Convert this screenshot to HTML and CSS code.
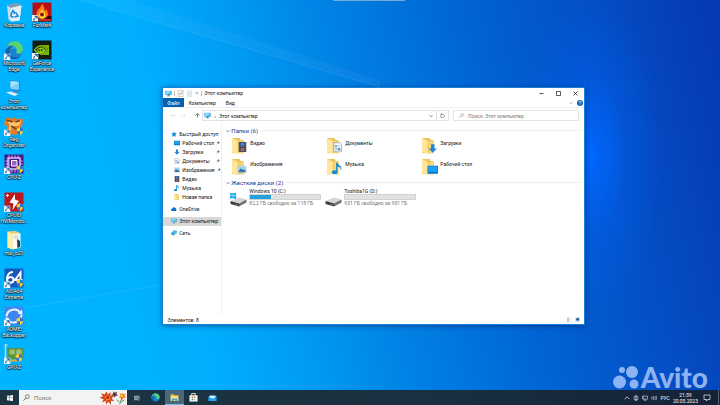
FILE: index.html
```html
<!DOCTYPE html>
<html lang="ru">
<head>
<meta charset="utf-8">
<title>Этот компьютер</title>
<link rel="stylesheet" href="styles.css">
</head>
<body>
<svg class="defs" aria-hidden="true">
  <symbol id="pc" viewBox="0 0 16 16"><path d="M1 2h14v9H1z" fill="#1b7fc4"/><path d="M2 3h12v7H2z" fill="#4cc3f5"/><path d="M2 3h12L4 10H2z" fill="#8be0ff"/><path d="M6 11h4v2h2v1H4v-1h2z" fill="#5a7e99"/></symbol>
  <symbol id="arrow" viewBox="0 0 16 16"><path d="M5 1h6v7h4l-7 7-7-7h4z" fill="#2586d8"/></symbol>
  <symbol id="doc" viewBox="0 0 16 16"><path d="M2 1h9l3 3v11H2z" fill="#f7fafc" stroke="#8497a5"/><path d="M4 5h3v3H4zM8 9h4v4H8z" fill="#4a96cf"/><path d="M8 6h4M4 10h3M4 12h3" stroke="#7696ac"/></symbol>
  <symbol id="props" viewBox="0 0 16 16"><path d="M2 1h12v14H2z" fill="#fbfbfb" stroke="#9a9a9a"/><path d="M5 8l2 3 5-7" fill="none" stroke="#9a6a5a" stroke-width="1.500"/></symbol>
  <symbol id="pic" viewBox="0 0 16 16"><path d="M1 2h14v12H1z" fill="#fff" stroke="#9aaab5"/><path d="M2 3h12v6H2z" fill="#8bd0fa"/><path d="M2 10l4-4 4 3 4-1v5H2z" fill="#34719f"/></symbol>
  <symbol id="film" viewBox="0 0 16 16"><path d="M2 0h12v16H2z" fill="#36424e"/><path d="M5 1h6v6H5z" fill="#4b80d2"/><path d="M5 9h6v6H5z" fill="#a06264"/><path d="M3.500 1v14M12.500 1v14" stroke="#b8c5ce" stroke-dasharray="1 2"/></symbol>
  <symbol id="note" viewBox="0 0 16 16"><path d="M6 0h2c0 4 7 4 5 10h-1c1-3-2-4-4-4v7a4 3 0 1 1-2-2z" fill="#168bd5"/></symbol>
  <symbol id="screen" viewBox="0 0 16 16"><path d="M0 2h16v12H0z" fill="#087ad1"/><path d="M1 3h14v8H1z" fill="#1ba2f1"/></symbol>
  <symbol id="folder" viewBox="0 0 16 16"><path d="M1 0h8l1 2h3v14H1z" fill="#e9c55b"/><path d="M1 0l6 3v13l-6-1z" fill="#ffe69a"/><path d="M8 3h5v13H8z" fill="#f7d677"/></symbol>
  <symbol id="star" viewBox="0 0 16 16"><path d="M8 1l2 4 5 1-3 4 1 5-5-2-5 2 1-5-3-4 5-1z" fill="#1f90d5"/></symbol>
  <symbol id="cloud" viewBox="0 0 16 16"><path d="M3 13a3 3 0 0 1 0-6 5 5 0 0 1 9-1 4 4 0 0 1 1 7z" fill="#0b6dc5"/></symbol>
  <symbol id="net" viewBox="0 0 16 16"><circle cx="6" cy="9" r="5" fill="#2582c4"/><path d="M7 2h8v7H7z" fill="#55bdf0" stroke="#1a79b5"/><path d="M2 9h8M6 4v10" stroke="#a5e1ff"/></symbol>
  <symbol id="pin" viewBox="0 0 10 10"><path d="M6 1l3 3-2 1-1 2-3-3 2-1zM4 6L1 9" fill="#69737b" stroke="#69737b"/></symbol>
  <symbol id="drive" viewBox="0 0 34 34"><path d="M1 22l17-7 15 4-15 8z" fill="#d5d5d5"/><path d="M1 22l17 5v6L1 28z" fill="#3d3d3d"/><path d="M18 27l15-8v6l-15 8z" fill="#707070"/><path d="M11 29l4 1" stroke="#69d478" stroke-width="1.500"/></symbol>
  <symbol id="win" viewBox="0 0 16 16"><path d="M0 2l7-1v6H0zM8 1l8-1v7H8zM0 8h7v7l-7-1zM8 8h8v8l-8-1z" fill="currentColor"/></symbol>
  <symbol id="down" viewBox="0 0 10 10"><path d="M1 3l4 4 4-4" fill="none" stroke="currentColor" stroke-width="1.500"/></symbol>
  <symbol id="link" viewBox="0 0 16 16"><path d="M0 0h16v16H0z" fill="#f7f7f7"/><path d="M3 14c0-5 2-7 6-7V4H6V2h8v8h-2V7c-4 0-6 2-6 7z" fill="#1464b4"/></symbol>
  <symbol id="shield" viewBox="0 0 16 16"><path d="M8 0l7 3c0 7-3 11-7 13C4 14 1 10 1 3z" fill="#ffcf36"/><path d="M8 0l7 3-.5 5H8zM1.500 8H8v8c-3-1-6-4-6.500-8z" fill="#2378d4"/></symbol>
  <symbol id="edge" viewBox="0 0 40 40"><circle cx="20" cy="20" r="18" fill="#1683d0"/><path d="M2 19C4 7 12 1 21 2c12 1 18 10 17 19-1 6-8 9-14 5 3-4 1-9-4-9-8 0-12 5-11 14C4 29 2 24 2 19z" fill="#27a9dc"/><path d="M5 11C14 0 32-1 37 14c3 11-6 15-13 12 3-4 3-11-4-14-5-2-11-2-15-1z" fill="#59d46f"/><path d="M3 20c4-7 10-9 17-7-8 2-11 8-8 15 4 8 13 9 22 4-7 9-20 8-26 1-4-4-5-8-5-13z" fill="#125da9"/></symbol>
  <symbol id="lens" viewBox="0 0 16 16"><circle cx="10" cy="6" r="4.500" fill="none" stroke="currentColor" stroke-width="1.300"/><path d="M7 9l-6 6" stroke="currentColor" stroke-width="1.500"/></symbol>
</svg>

<div class="screen">
  <main class="desktop">
    <svg class="rays" viewBox="0 0 720 390" preserveAspectRatio="none" aria-hidden="true"><path d="M80 0L380 87L380 80L130 0z" fill="#fff" opacity=".04"/><path d="M80 0L380 87M0 312L200 278" fill="none" stroke="#fff" opacity=".09"/></svg>
    <div class="top-tab"></div>
    <nav class="shortcuts" aria-label="Рабочий стол">
      <a class="shortcut" href="#"><svg viewBox="0 0 40 40"><path d="M6 7l18-5 11 5-4 30-17 2-5-4z" fill="#c7dfec"/><path d="M6 7l18-5 11 5-21 5z" fill="#7e9cae"/><path d="M14 12l21-5-4 30-17 2z" fill="#e4f1f8"/><path d="M14 24l4-7 4 5-3 1M24 21l4 7-7 2M19 31l-5-3 1-4" fill="none" stroke="#1682d2" stroke-width="3"/></svg><span>Корзина</span></a>
      <a class="shortcut" href="#"><svg viewBox="0 0 40 40"><path d="M1 1h38v38H1z" fill="#b61016"/><path d="M1 28h38v11H1z" fill="#380909"/><path d="M20 3c-1 9-12 12-11 22 1 6 6 9 11 9s12-3 12-10c0-4-3-6-3-10-2 2-3 3-4 4 1-6-2-11-5-15z" fill="#ff7619"/><path d="M20 14c-2 5-6 7-6 12 0 9 12 9 13 0 0-5-5-7-7-12z" fill="#ffd83a"/><circle cx="20" cy="25" r="4" fill="#8e170c"/><path d="M14 36h24" stroke="#ff3021" stroke-width="3"/><use href="#link" y="26" width="13" height="13"/></svg><span>FurMark</span></a>
      <a class="shortcut" href="#"><svg viewBox="0 0 40 40"><use href="#edge" width="40" height="40"/><use href="#link" y="27" width="13" height="13"/></svg><span>Microsoft Edge</span></a>
      <a class="shortcut" href="#"><svg viewBox="0 0 40 40"><path d="M1 1h38v38H1z" fill="#151b15"/><path d="M16 10h18v20H16z" fill="#78b900"/><path d="M5 20c9-13 20-11 27 0-8 10-19 12-27 0z" fill="#151b15"/><path d="M5 20c8-11 17-11 25 0-7 8-17 10-25 0zM11 20c4 7 10 5 14 0-5-6-10-6-14 0zM16 20c1-4 5-3 7 0-2 4-6 4-7 0" fill="none" stroke="#8ac718" stroke-width="2.500"/><use href="#link" y="26" width="13" height="13"/></svg><span>GeForce Experience</span></a>
      <a class="shortcut first-column" href="#"><svg viewBox="0 0 40 40"><path d="M12 4l20 3v20l-20-3z" fill="#1688d9"/><path d="M13 6l17 2v16l-17-2z" fill="#78cff9"/><path d="M13 6l17 2-17 11z" fill="#a5e5ff"/><path d="M20 25v4l-6 1 10 3 7-3-6-2v-2" fill="#3f89b9"/><path d="M4 29l9-2 16 5-8 4z" fill="#dbeef8"/></svg><span>Этот компьютер</span></a>
      <a class="shortcut first-column" href="#"><svg viewBox="0 0 40 40"><path d="M3 3l14 2 5-3 4 5 12-2-1 14-5 4 3 11-15 4-16-4 3-14-7-3z" fill="#e67c23"/><path d="M7 9l14 4 14-6-4 12-13 2-9 11 2-14z" fill="#ffc56b"/><path d="M5 8l12 4M23 12l9-3M14 20l14 8" stroke="#68431e" stroke-width="3"/><use href="#link" y="27" width="13" height="13"/><use href="#shield" x="24" y="22" width="16" height="17"/></svg><span>Reg Organizer</span></a>
      <a class="shortcut first-column" href="#"><svg viewBox="0 0 40 40"><path d="M1 1h38v38H1z" fill="#4d168b"/><path d="M8 8h24v22H8z" fill="none" stroke="#d7c4f0" stroke-width="3"/><path d="M10 3v32M16 3v5M22 3v5M28 3v5M16 30v7M22 30v7M28 30v7M3 14h5M3 20h5M3 26h5M32 14h5M32 20h5" stroke="#cbb2e8" stroke-width="2"/><path d="M15 13h11v11H15z" fill="#8f65bd" stroke="#fff" stroke-width="2"/><use href="#link" y="27" width="13" height="13"/><use href="#shield" x="24" y="22" width="16" height="17"/></svg><span>CPU-Z</span></a>
      <a class="shortcut first-column" href="#"><svg viewBox="0 0 40 40"><path d="M1 1h38v38H1z" fill="#be171d"/><path d="M22 4L11 21l8 2-2 13 13-18-8-3z" fill="#fff"/><path d="M7 4v6M4 7h6" stroke="#ffdada" stroke-width="2"/><use href="#link" y="27" width="13" height="13"/><use href="#shield" x="24" y="22" width="16" height="17"/></svg><span>CPUID HWMonito…</span></a>
      <a class="shortcut first-column" href="#"><svg viewBox="0 0 40 40"><path d="M7 3l16-1 9 4v30l-16 3-9-4z" fill="#efd173"/><path d="M17 8l16-1v28l-16 3z" fill="#f8fbfa"/><path d="M20 12h9M20 16h9" stroke="#b3c2c3" stroke-width="2"/><path d="M26 18l6 4v12l-5 2z" fill="#273a43"/><path d="M7 3l10 5v30L7 35z" fill="#ffeeaa"/></svg><span>msi_b21</span></a>
      <a class="shortcut first-column" href="#"><svg viewBox="0 0 40 40"><path d="M1 1h38v38H1z" fill="#1758bd"/><path d="M18 8C9 8 5 17 6 24c1 8 13 7 13 0 0-7-9-8-13-1M33 31V9L22 24h15" fill="none" stroke="#fff" stroke-width="4"/><use href="#link" y="27" width="13" height="13"/><use href="#shield" x="24" y="22" width="16" height="17"/></svg><span>AIDA64 Extreme</span></a>
      <a class="shortcut first-column" href="#"><svg viewBox="0 0 40 40"><path d="M1 1h38v38H1z" fill="#3f86ef"/><path d="M5 21C6 5 27 3 32 14M35 17C34 35 12 38 7 25" fill="none" stroke="#e8f4ff" stroke-width="4"/><path d="M27 15l10 2-1-10zM11 25L3 22l1 11z" fill="#e8f4ff"/><use href="#link" y="27" width="13" height="13"/><use href="#shield" x="24" y="22" width="16" height="17"/></svg><span>AOMEI Backupper</span></a>
      <a class="shortcut first-column" href="#"><svg viewBox="0 0 40 40"><path d="M3 1v37M1 2h6" stroke="#c9d4ce" stroke-width="3"/><path d="M7 8h32v22H7z" fill="#55943d"/><path d="M11 11h11v10H11z" fill="#9bc36c"/><circle cx="30" cy="16" r="6" fill="#a5b77b"/><path d="M10 31h25v4H10z" fill="#d6ad37"/><use href="#link" y="27" width="13" height="13"/><use href="#shield" x="22" y="19" width="16" height="17"/></svg><span>GPU-Z</span></a>
    </nav>

    <section class="window" aria-label="Этот компьютер">
      <header class="titlebar">
        <svg class="icon"><use href="#pc"/></svg><i class="rule"></i>
        <svg class="icon"><use href="#props"/></svg>
        <svg class="icon" viewBox="0 0 16 16"><path d="M3 2h10v13H3z" fill="#e0edf7" stroke="#c3d3df"/></svg>
        <svg class="tiny"><use href="#down"/></svg><i class="rule"></i>
        <h1>Этот компьютер</h1>
        <div class="window-buttons">
          <button aria-label="Свернуть"><svg viewBox="0 0 10 10"><path d="M1 5h8" stroke="#222" stroke-width="1.500"/></svg></button>
          <button aria-label="Развернуть"><svg viewBox="0 0 10 10"><path d="M1 1h8v8H1z" fill="none" stroke="#222" stroke-width="1.500"/></svg></button>
          <button aria-label="Закрыть"><svg viewBox="0 0 10 10"><path d="M1 1l8 8M9 1L1 9" stroke="#222" stroke-width="1.500"/></svg></button>
        </div>
      </header>
      <div class="tabs">
        <button class="file-tab">Файл</button><button>Компьютер</button><button>Вид</button>
        <svg class="tiny expand"><use href="#down"/></svg>
        <svg class="help" viewBox="0 0 16 16"><circle cx="8" cy="8" r="8" fill="#0860b8"/><path d="M5 6c0-4 7-3 6 0-1 2-3 2-3 4M8 12v2" fill="none" stroke="#fff" stroke-width="2"/></svg>
      </div>
      <div class="toolbar">
        <button class="back" aria-label="Назад"><svg viewBox="0 0 10 10"><path d="M9 5H1l3-3M1 5l3 3" fill="none" stroke="#ccd0d4"/></svg></button>
        <button class="forward" aria-label="Вперёд"><svg viewBox="0 0 10 10"><path d="M1 5h8L6 2M9 5L6 8" fill="none" stroke="#ccd0d4"/></svg></button>
        <button class="up" aria-label="Вверх"><svg viewBox="0 0 10 10"><path d="M5 9V1L1 5M5 1l4 4" fill="none" stroke="#555" stroke-width="1.500"/></svg></button>
        <div class="address"><svg class="icon"><use href="#pc"/></svg><span class="crumb">›</span><span>Этот компьютер</span><svg class="tiny"><use href="#down"/></svg></div>
        <button class="refresh" aria-label="Обновить"><svg viewBox="0 0 10 10"><path d="M3 2a4 4 0 1 0 4 0M3 0v3h3" fill="none" stroke="#555" stroke-width="1.200"/></svg></button>
        <label class="search"><svg class="lens"><use href="#lens"/></svg><input type="search" placeholder="Поиск: Этот компьютер" aria-label="Поиск: Этот компьютер"></label>
      </div>
      <div class="panes">
        <nav class="tree" aria-label="Навигация">
          <a href="#"><svg class="icon"><use href="#star"/></svg>Быстрый доступ</a>
          <a class="child" href="#"><svg class="icon"><use href="#screen"/></svg>Рабочий стол<svg class="pin"><use href="#pin"/></svg></a>
          <a class="child" href="#"><svg class="icon"><use href="#arrow"/></svg>Загрузки<svg class="pin"><use href="#pin"/></svg></a>
          <a class="child" href="#"><svg class="icon"><use href="#doc"/></svg>Документы<svg class="pin"><use href="#pin"/></svg></a>
          <a class="child" href="#"><svg class="icon"><use href="#pic"/></svg>Изображения<svg class="pin"><use href="#pin"/></svg></a>
          <a class="child" href="#"><svg class="icon"><use href="#film"/></svg>Видео</a>
          <a class="child" href="#"><svg class="icon"><use href="#note"/></svg>Музыка</a>
          <a class="child" href="#"><svg class="icon"><use href="#folder"/></svg>Новая папка</a>
          <a class="root" href="#"><svg class="icon"><use href="#cloud"/></svg>OneDrive</a>
          <a class="root selected" href="#"><svg class="icon"><use href="#pc"/></svg>Этот компьютер</a>
          <a class="root" href="#"><svg class="icon"><use href="#net"/></svg>Сеть</a>
        </nav>
        <div class="content">
          <h2><svg class="tiny"><use href="#down"/></svg>Папки (6)</h2>
          <div class="tiles">
            <a class="tile" href="#"><svg viewBox="0 0 34 34"><use href="#folder" x="-2" y="2" width="31" height="31"/><use href="#film" x="11" y="9" width="20" height="22"/></svg><span>Видео</span></a>
            <a class="tile" href="#"><svg viewBox="0 0 34 34"><use href="#folder" x="-2" y="2" width="31" height="31"/><use href="#doc" x="11" y="10" width="21" height="21"/></svg><span>Документы</span></a>
            <a class="tile" href="#"><svg viewBox="0 0 34 34"><use href="#folder" x="-2" y="2" width="31" height="31"/><use href="#arrow" x="12" y="13" width="19" height="20"/></svg><span>Загрузки</span></a>
            <a class="tile" href="#"><svg viewBox="0 0 34 34"><use href="#folder" x="-2" y="2" width="31" height="31"/><use href="#pic" x="9" y="14" width="22" height="18"/></svg><span>Изображения</span></a>
            <a class="tile" href="#"><svg viewBox="0 0 34 34"><use href="#folder" x="-2" y="2" width="31" height="31"/><use href="#note" x="8" y="9" width="26" height="23"/></svg><span>Музыка</span></a>
            <a class="tile" href="#"><svg viewBox="0 0 34 34"><use href="#folder" x="-2" y="2" width="31" height="31"/><use href="#screen" x="10" y="13" width="23" height="21"/></svg><span>Рабочий стол</span></a>
          </div>
          <h2><svg class="tiny"><use href="#down"/></svg>Жесткие диски (2)</h2>
          <div class="tiles drives">
            <a class="drive" href="#"><svg class="drive-icon" viewBox="0 0 34 34"><use href="#drive" width="34" height="34"/><svg class="win-mark" y="5" width="13" height="13"><use href="#win"/></svg></svg><span class="drive-info"><span>Windows 10 (C:)</span><span class="bar"><span class="used" style="width:30%"></span></span><small>82,2 ГБ свободно из 118 ГБ</small></span></a>
            <a class="drive" href="#"><svg class="drive-icon" viewBox="0 0 34 34"><use href="#drive" width="34" height="34"/></svg><span class="drive-info"><span>Toshiba1G (D:)</span><span class="bar"></span><small>931 ГБ свободно из 931 ГБ</small></span></a>
          </div>
        </div>
      </div>
      <footer class="status"><span>Элементов: 8</span>
        <svg viewBox="0 0 16 16"><path d="M1 2h5v3H1zM1 7h5v3H1zM1 12h5v3H1zM9 3h5M9 8h5M9 13h5" fill="#aab" stroke="#aab"/></svg>
        <svg viewBox="0 0 16 16"><path d="M1 1h14v14H1z" fill="#b9def5"/><path d="M4 4h9v7H4z" fill="#1e557c"/></svg>
      </footer>
    </section>

    <div class="watermark"><svg viewBox="0 0 26 24"><circle cx="9" cy="5" r="3"/><circle cx="19" cy="7" r="6"/><circle cx="6.500" cy="17" r="6.500"/><circle cx="21" cy="19" r="4.500"/></svg><span>Avito</span></div>
  </main>

  <footer class="taskbar">
    <button class="task" aria-label="Пуск"><svg><use href="#win"/></svg></button>
    <label class="task-search"><svg class="lens"><use href="#lens"/></svg><input type="search" placeholder="Поиск" aria-label="Поиск">
      <svg class="flowers" viewBox="0 0 84 42"><path d="M29 20l6 21M70 19l-8 22M68 34l8-6M60 34l-6-7" stroke="#4f823e" stroke-width="3"/><path d="M22 3l5 9 9-7-2 11 11-1-7 9 8 8-11-1 1 10-8-7-7 7-1-10-11 5 5-10-12-4 10-5-6-9 11 4z" fill="#d84215"/><path d="M24 10l3 8 8-3-3 8 4 7-8-3-6 5-1-8-7-4 8-3z" fill="#ff8229"/><circle cx="26" cy="21" r="4" fill="#73301e"/><path d="M43 2l5 5 7-4-3 8 5 5-7 1-4 5-3-6-7-2 6-5z" fill="#80444b"/><circle cx="48" cy="11" r="3" fill="#242637"/><path d="M69 5l3 6 8-2-4 7 6 5-8 1-3 6-4-6-8-1 6-5-4-8 7 3z" fill="#f17018"/><circle cx="69" cy="16" r="4" fill="#ffd32d"/></svg>
    </label>
    <button class="task" aria-label="Представление задач"><svg viewBox="0 0 16 16"><path d="M1 1v3h8V1M1 15v-3h8v3M1 6h8v4H1zM13 1v14M12 7h3" fill="none" stroke="#e9eef0" stroke-width="1.500"/></svg></button>
    <button class="task" aria-label="Microsoft Edge"><svg class="large"><use href="#edge"/></svg></button>
    <button class="task active" aria-label="Проводник"><svg class="large" viewBox="0 0 20 20"><path d="M1 3h7l2 2h9v13H1z" fill="#e4b642"/><path d="M2 7h16v10H2z" fill="#ffe490"/><path d="M4 12h12v6h-4v-3H8v3H4z" fill="#3c9bdc"/></svg></button>
    <button class="task" aria-label="Microsoft Store"><svg class="large" viewBox="0 0 20 20"><path d="M6 6V1h8v5" fill="none" stroke="#eee" stroke-width="2"/><path d="M1 5h18v14H1z" fill="#f5f7f7"/><path d="M6 8h3v3H6z" fill="#e54832"/><path d="M11 8h3v3h-3z" fill="#6dac36"/><path d="M6 13h3v3H6z" fill="#278dd4"/><path d="M11 13h3v3h-3z" fill="#f5b922"/></svg></button>
    <button class="task" aria-label="Почта"><svg class="large" viewBox="0 0 20 20"><path d="M1 7l9-5 9 5v11H1z" fill="#075ba7"/><path d="M3 6h14v7H3z" fill="#dff4ff"/><path d="M1 8l9 5 9-5v10H1z" fill="#26a5ee"/></svg></button>
    <div class="tray">
      <svg viewBox="0 0 10 10"><path d="M1 7l4-4 4 4" fill="none" stroke="#e9eef0" stroke-width="1.300"/></svg>
      <svg viewBox="0 0 16 16"><path d="M5 1h6M3 4h10v8H3zM8 12v3M5 15h6" fill="none" stroke="#e9eef0" stroke-width="1.500"/><circle cx="8" cy="8" r="2" fill="#e9eef0"/></svg>
      <svg viewBox="0 0 16 16"><path d="M3 3h12v8H3zM8 11v3M5 14h7M1 2v8h3" fill="none" stroke="#e9eef0" stroke-width="1.500"/></svg>
      <svg viewBox="0 0 16 16"><path d="M1 6h3l3-3v10l-3-3H1zM9 5c2 2 2 4 0 6M11 3c4 3 4 7 0 10M14 2c3 4 3 8 0 12" fill="none" stroke="#e9eef0" stroke-width="1.300"/></svg>
      <span>РУС</span>
      <time datetime="2023-05-20T21:39"><span>21:39</span><span>20.05.2023</span></time>
      <svg class="notice" viewBox="0 0 16 16"><path d="M2 2h12v9H9l-2 3v-3H2z" fill="none" stroke="#e9eef0" stroke-width="1.400"/></svg>
      <i class="peek"></i>
    </div>
  </footer>
</div>
</body>
</html>
```
FILE: styles.css
```css
* { box-sizing: border-box; }
html, body { height: 100%; margin: 0; }
body { font: 5px/6px Roboto, "Liberation Sans", sans-serif; color: #111; overflow: hidden; }
a { color: inherit; text-decoration: none; }
button { border: 0; padding: 0; background: none; font: inherit; color: inherit; }
input { border: 0; padding: 0; background: none; font: inherit; outline: 0; min-width: 0; }
h1, h2 { margin: 0; font-weight: 400; }
svg { display: block; flex: none; }
.defs { position: absolute; width: 0; height: 0; }
.icon { width: 7px; height: 7px; }
.tiny { width: 4px; height: 4px; color: #444; }
.lens { width: 5px; height: 5px; }

.screen { min-height: 100vh; display: flex; flex-direction: column; }
.desktop {
  position: relative;
  flex: 1;
  background:
    radial-gradient(ellipse 10% 42% at 82% 40%, rgba(0, 104, 255, .95), rgba(0, 96, 240, .4) 50%, transparent),
    linear-gradient(77deg, #00b4ff 0%, #00b0ff 26%, #009cf4 38%, #0080e4 52%, #0064d4 68%, #0450c6 82%, #0538b2 100%);
}
.rays { position: absolute; inset: 0; width: 100%; height: 100%; }
.top-tab { position: absolute; top: 0; left: 46.250%; width: 10%; height: 1px; background: #6faed2; }

.shortcuts { position: relative; display: grid; grid-template-columns: 28px 28px; grid-auto-rows: 38px; padding-top: 2px; width: 56px; }
.shortcut { display: flex; flex-direction: column; align-items: center; color: #fff; text-align: center; text-shadow: 0 0 1px #000, 0 1px 1px #000, 0 0 2px #000; }
.shortcut svg { width: 20px; height: 20px; }
.first-column { grid-column: 1; }

.window {
  position: absolute;
  inset: 22.300% 18.700% 16.600% 22.550%;
  display: flex;
  flex-direction: column;
  background: #fff;
  border: 1px solid #1a82d6;
  box-shadow: 0 1px 5px rgba(0, 20, 70, .5);
}
.titlebar { display: flex; align-items: center; gap: 2px; height: 11px; padding-left: 2px; }
.titlebar h1 { font-size: 5px; }
.rule { width: 1px; height: 5px; background: #bbb; }
.window-buttons { display: flex; margin-left: auto; }
.window-buttons button { width: 17px; display: grid; place-items: center; }
.window-buttons svg { width: 5px; height: 5px; }
.tabs { display: flex; align-items: center; height: 9px; border-bottom: 1px solid #eee; }
.tabs button { padding: 0 5px; height: 9px; }
.tabs .file-tab { padding: 0 4px; background: #0560b0; color: #fff; }
.expand { margin-left: auto; color: #999; }
.help { width: 6px; height: 6px; margin: 0 1px 0 4px; }
.toolbar { display: flex; align-items: center; height: 16px; padding: 2px 5px; }
.toolbar button { width: 10px; display: grid; place-items: center; }
.toolbar button svg { width: 5px; height: 5px; }
.toolbar .forward { margin-right: 4px; }
.address { flex: 2 1 0; display: flex; align-items: center; gap: 3px; height: 11px; padding: 0 3px 0 1px; border: 1px solid #e3e3e3; }
.address .tiny { margin-left: auto; }
.toolbar .refresh { width: 12px; height: 11px; border: 1px solid #e3e3e3; border-left: 0; margin-right: 4px; }
.search { flex: 1 1 0; display: flex; align-items: center; gap: 4px; height: 11px; padding: 0 5px; border: 1px solid #e3e3e3; color: #777; }
.search input { flex: 1; }
input::placeholder { color: #777; opacity: 1; }

.panes { flex: 1; display: flex; min-height: 0; }
.tree { width: 59px; padding-top: 6px; border-right: 1px solid #f0f0f0; }
.tree a { display: flex; align-items: center; gap: 2px; height: 9px; padding-left: 8px; white-space: nowrap; }
.tree .icon { width: 6px; height: 6px; }
.tree .child { padding-left: 11px; }
.tree .root { margin-top: 3px; }
.tree .selected { background: #d8d8d8; }
.pin { width: 4px; height: 4px; margin: 0 1px 0 auto; }
.content { flex: 1; padding: 3px 2px 0 4px; }
.content h2 { display: flex; align-items: center; gap: 1px; font-size: 6px; line-height: 8px; color: #1e3287; }
.content h2::after { content: ""; flex: 1; height: 1px; margin-left: 2px; background: #eee; }
.tiles { display: grid; grid-template-columns: repeat(3, 95px); grid-auto-rows: 21px; padding: 2px 0 0 6px; }
.tile, .drive { display: flex; gap: 1px; }
.tile svg, .drive-icon { width: 17px; height: 17px; }
.tile span { padding-top: 3px; }
.drives { padding: 1px 0 0 4px; }
.drive-icon { margin-top: 2px; }
.win-mark { color: #18a9ed; }
.drive-info { display: flex; flex-direction: column; width: 72px; margin-left: 1px; white-space: nowrap; }
.bar { height: 6px; background: #e1e1e1; border: 1px solid #d2d2d2; }
.used { display: block; height: 100%; background: #26a0da; }
.drive small { font-size: 5px; color: #777; }
.status { display: flex; align-items: center; gap: 3px; height: 9px; padding: 0 4px; }
.status span { margin-right: auto; }
.status svg { width: 5px; height: 5px; }

.watermark { position: absolute; right: 12px; bottom: 1px; display: flex; align-items: center; gap: 2px; color: #8eb3f3; font: 900 28px/24px Lato, sans-serif; }
.watermark svg { width: 26px; height: 24px; fill: currentColor; }

.taskbar { display: flex; height: 15px; background: linear-gradient(90deg, #1d3643, #18303f 60%, #142238); color: #f4f6f8; }
.task { width: 19px; display: grid; place-items: center; }
.task svg { width: 6px; height: 6px; }
.task .large { width: 9px; height: 9px; }
.active { background: #49687b; border-bottom: 1px solid #76b9ed; }
.task-search { display: flex; align-items: center; gap: 4px; width: 15%; padding-left: 4px; background: #f2f3f3; color: #333; }
.task-search .lens { width: 7px; height: 7px; }
.task-search input { flex: 1; font-size: 6px; }
.flowers { width: 28px; height: 15px; }
.tray { display: flex; align-items: center; gap: 3px; margin-left: auto; }
.tray svg { width: 6px; height: 6px; }
.tray time { display: flex; flex-direction: column; align-items: center; line-height: 6px; }
.tray .notice { width: 8px; height: 8px; margin: 0 4px 0 2px; }
.peek { width: 1px; height: 15px; margin-right: 1px; background: #52616f; }
```
